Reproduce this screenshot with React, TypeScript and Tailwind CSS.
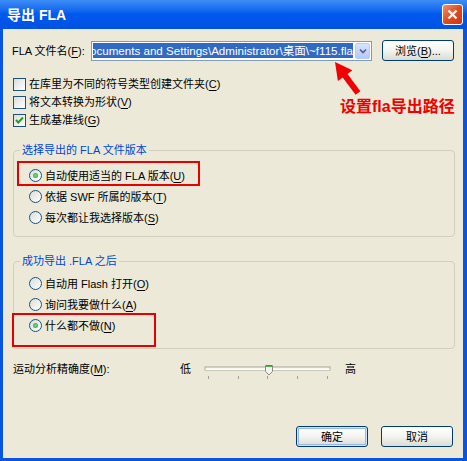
import type { ReactNode } from 'react';

function Key({ k }: { k: string }) {
  return <span className="underline underline-offset-[2px]">{k}</span>;
}

function Checkbox({ checked }: { checked?: boolean }) {
  return (
    <span className="flex h-[13px] w-[13px] shrink-0 items-center justify-center border border-[#1c5180] bg-linear-to-br from-[#dcdcd7] to-white">
      {checked && (
        <svg width="11" height="11" viewBox="0 0 11 11">
          <path d="M2 5 L4.3 7.5 L9 2.5" fill="none" stroke="#21a121" strokeWidth="2" />
        </svg>
      )}
    </span>
  );
}

function Radio({ checked }: { checked?: boolean }) {
  return (
    <span className="flex h-[13px] w-[13px] shrink-0 items-center justify-center rounded-full border border-[#1c5180] bg-linear-to-br from-[#dcdcd7] to-white">
      {checked && <span className="h-[5px] w-[5px] rounded-full bg-radial from-[#7be07b] to-[#1d9b1d]" />}
    </span>
  );
}

function CheckRow({ checked, children }: { checked?: boolean; children: ReactNode }) {
  return (
    <div className="flex h-[18px] items-center gap-[3px]">
      <Checkbox checked={checked} />
      <span>{children}</span>
    </div>
  );
}

function RadioRow({ checked, children }: { checked?: boolean; children: ReactNode }) {
  return (
    <div className="flex h-[21px] items-center gap-[3px]">
      <Radio checked={checked} />
      <span>{children}</span>
    </div>
  );
}

function XpButton({ primary, children }: { primary?: boolean; children: ReactNode }) {
  return (
    <button
      className={`flex h-[21px] w-[72px] items-center justify-center rounded-[3px] border border-[#003c74] bg-linear-to-b from-white via-[#f4f4f0] to-[#dcdcd2] text-black ${
        primary ? 'shadow-[inset_0_0_0_1px_#cee7ff,inset_0_0_0_2px_#98b8ea]' : ''
      }`}
    >
      {children}
    </button>
  );
}

export default function App() {
  return (
    <div className="relative flex h-[461px] w-[467px] flex-col overflow-hidden bg-[#0a55e0] font-['Liberation_Sans','Noto_Sans_CJK_SC',sans-serif] text-[11px] leading-[14px] text-black">
      {/* Title bar */}
      <div className="flex h-[29px] shrink-0 items-center justify-between bg-linear-to-b from-[#3d8df5] via-[#0058ee] to-[#0053e0] pl-[7px] pr-[4px]">
        <span className="text-[14px] font-bold text-white">导出 FLA</span>
        <div className="flex h-[21px] w-[21px] items-center justify-center rounded-[3px] border border-white bg-linear-to-br from-[#ee8e6e] via-[#e04a20] to-[#c8361a]">
          <svg width="11" height="11" viewBox="0 0 11 11">
            <path d="M1.5 1.5 L9.5 9.5 M9.5 1.5 L1.5 9.5" stroke="white" strokeWidth="2.4" />
          </svg>
        </div>
      </div>

      {/* Body */}
      <div className="mb-[3px] ml-[3px] mr-[4px] flex flex-1 flex-col bg-[#ece9d8] pl-[10px] pr-[8px]">
        {/* File row */}
        <div className="mt-[11px] flex h-[21px] items-center">
          <span className="-ml-[1px] w-[79px]">
            FLA 文件名(<Key k="F" />):
          </span>
          <div className="flex h-[20px] w-[281px] items-center border border-[#7f9db9] bg-white pl-[1px] pr-[1px]">
            <div className="flex h-[15px] w-[260px] items-center justify-end overflow-hidden whitespace-nowrap bg-[#316ac5] text-[11.6px] text-white">
              <span>Documents and Settings\Administrator\桌面\~f115.fla</span>
            </div>
            <div className="ml-auto flex h-[16px] w-[15px] items-center justify-center rounded-[2px] border border-[#b9cbf5] bg-linear-to-b from-[#d8e4fd] to-[#b4c9f8]">
              <svg width="8" height="6" viewBox="0 0 8 6">
                <path d="M1 1.5 L4 4.5 L7 1.5" fill="none" stroke="#4d6185" strokeWidth="1.6" />
              </svg>
            </div>
          </div>
          <div className="ml-[10px]">
            <XpButton>
              浏览(<Key k="B" />)...
            </XpButton>
          </div>
        </div>

        {/* Checkboxes */}
        <div className="mt-[14px] flex flex-col">
          <CheckRow>
            在库里为不同的符号类型创建文件夹(<Key k="C" />)
          </CheckRow>
          <CheckRow>
            将文本转换为形状(<Key k="V" />)
          </CheckRow>
          <CheckRow checked>
            生成基准线(<Key k="G" />)
          </CheckRow>
        </div>

        {/* Group 1 */}
        <div className="mt-[21px] rounded-[4px] border border-[#d0d0bf] pb-[8px] pl-[15px]">
          <div className="-mt-[8px] -ml-[9px] w-fit bg-[#ece9d8] px-[2px] text-[#0046d5]">选择导出的 FLA 文件版本</div>
          <div className="mt-[8px] flex flex-col">
            <RadioRow checked>
              自动使用适当的 FLA 版本(<Key k="U" />)
            </RadioRow>
            <RadioRow>
              依据 SWF 所属的版本(<Key k="T" />)
            </RadioRow>
            <RadioRow>
              每次都让我选择版本(<Key k="S" />)
            </RadioRow>
          </div>
        </div>

        {/* Group 2 */}
        <div className="mt-[24px] rounded-[4px] border border-[#d0d0bf] pb-[12px] pl-[15px]">
          <div className="-mt-[8px] -ml-[9px] w-fit bg-[#ece9d8] px-[2px] text-[#0046d5]">成功导出 .FLA 之后</div>
          <div className="mt-[5px] flex flex-col">
            <RadioRow>
              自动用 Flash 打开(<Key k="O" />)
            </RadioRow>
            <RadioRow>
              询问我要做什么(<Key k="A" />)
            </RadioRow>
            <RadioRow checked>
              什么都不做(<Key k="N" />)
            </RadioRow>
          </div>
        </div>

        {/* Slider row */}
        <div className="mt-[11px] flex h-[20px] items-start">
          <span className="mt-[2px] w-[167px]">
            运动分析精确度(<Key k="M" />):
          </span>
          <span className="mt-[2px] w-[11px]">低</span>
          <svg className="ml-[12px]" width="132" height="20" viewBox="0 0 132 20">
            <rect x="2" y="7" width="125" height="3" fill="#f7f7f2" stroke="#a8a89c" strokeWidth="1" />
            <line x1="2.5" y1="9.5" x2="126.5" y2="9.5" stroke="#ffffff" />
            {[5, 35, 64, 94, 124].map((x) => (
              <line key={x} x1={x + 0.5} y1="16" x2={x + 0.5} y2="19" stroke="#a0a097" />
            ))}
            <path d="M62.5 5.5 H69.5 V11.5 L66 15 L62.5 11.5 Z" fill="#f3f3ee" stroke="#8a8a7f" />
            <line x1="63" y1="6" x2="69" y2="6" stroke="#21a121" strokeWidth="1.6" />
          </svg>
          <span className="ml-[10px] mt-[2px]">高</span>
        </div>

        {/* Buttons */}
        <div className="mt-auto mb-[11px] mr-[2px] flex justify-end gap-[13px]">
          <XpButton primary>确定</XpButton>
          <XpButton>取消</XpButton>
        </div>
      </div>

      {/* Annotations */}
      <div className="pointer-events-none absolute left-[17px] top-[161px] h-[25px] w-[183px] border-2 border-[#e80000]" />
      <div className="pointer-events-none absolute left-[12px] top-[313px] h-[34px] w-[144px] border-2 border-[#e80000]" />
      <svg className="pointer-events-none absolute left-0 top-0" width="467" height="461">
        <polygon
          points="335,62 352.3,70.3 347.5,73.9 360.4,91.2 355.6,94.8 342.7,77.5 337.9,81.1"
          fill="#f00000"
        />
      </svg>
      <span className="pointer-events-none absolute left-[340px] top-[97px] text-[16px] font-bold leading-[20px] text-[#f00000]">
        设置fla导出路径
      </span>
    </div>
  );
}
